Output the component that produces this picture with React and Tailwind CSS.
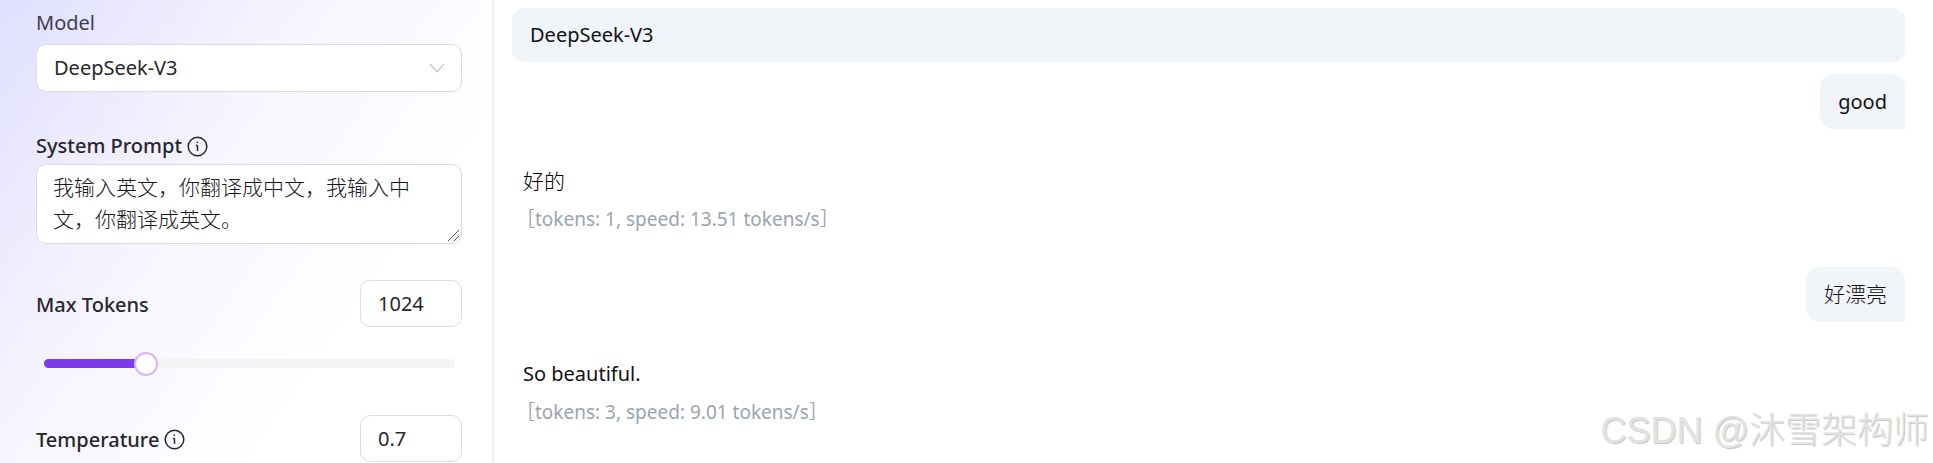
import React from 'react';

const FONT = "font-['Noto_Sans','Noto_Sans_CJK_SC',sans-serif]";

function InfoIcon() {
  return (
    <svg className="h-[21px] w-[21px]" viewBox="0 0 21 21" fill="none" stroke="currentColor" strokeWidth="1.5">
      <circle cx="10.5" cy="10.5" r="9.3" />
      <path d="M10.5 9.5v5.5M8.8 9.5h1.7" />
      <circle cx="10.3" cy="6.3" r="0.5" fill="currentColor" strokeWidth="0.8" />
    </svg>
  );
}

function Label({ children, info }) {
  return (
    <div className="flex items-center gap-[5px] text-[20px] leading-[26px] font-medium text-[#27272a]">
      {children}
      {info && <InfoIcon />}
    </div>
  );
}

function NumberBox({ value }) {
  return (
    <div className="flex h-[47px] w-[102px] items-center rounded-[10px] border border-[#dcdcde] bg-white pt-[1px] pl-[17px] text-[20px] text-[#27272a]">
      {value}
    </div>
  );
}

function Metrics({ children }) {
  return <div className="mt-[12px] h-[26px] pl-[4px] text-[19px] leading-[26px] text-[#9ca3af]">{children}</div>;
}

function UserBubble({ children, cjk }) {
  return (
    <div className="flex justify-end">
      <div className={`flex h-[55px] items-center rounded-[14px] rounded-br-none bg-[#f1f4f9] px-[18px] text-[#111] ${cjk ? 'text-[21px] font-light' : 'pt-[1px] text-[20px]'}`}>
        {children}
      </div>
    </div>
  );
}

export default function App() {
  return (
    <div className={`relative flex h-[463px] w-[1933px] overflow-hidden bg-white ${FONT}`}>
      <aside className="h-full w-[494px] shrink-0 border-r-2 border-[#f1f1f4] bg-[linear-gradient(125deg,#dfdfff_0%,#eeebff_22%,#f8f6ff_42%,#ffffff_72%)] pt-[10px] pr-[30px] pl-[36px]">
        <div className="text-[20px] leading-[26px] text-[#3f3f46]">Model</div>
        <div className="mt-[8px] flex h-[48px] items-center justify-between rounded-[10px] border border-[#dcdcde] bg-white pr-[16px] pl-[17px] text-[20px] text-[#27272a]">
          DeepSeek-V3
          <svg className="h-[10px] w-[16px] text-[#b4b4b8]" viewBox="0 0 16 10" fill="none" stroke="currentColor" strokeWidth="1.1">
            <path d="M1 1l7 8 7-8" />
          </svg>
        </div>

        <div className="mt-[41px]">
          <Label info>System Prompt</Label>
        </div>
        <div className="relative mt-[5px] h-[80px] rounded-[10px] border border-[#dcdcde] bg-white pt-[6px] pr-[40px] pl-[16px] text-[21px] leading-[32px] font-light text-[#18181b]">
          我输入英文，你翻译成中文，我输入中文，你翻译成英文。
          <svg className="absolute right-[1px] bottom-[1px] h-[13px] w-[13px] text-[#555]" viewBox="0 0 13 13" fill="none" stroke="currentColor">
            <path d="M1 12 12 1M7 12l5-5" />
          </svg>
        </div>

        <div className="mt-[36px] flex items-center justify-between">
          <div className="pt-[2px]">
            <Label>Max Tokens</Label>
          </div>
          <NumberBox value="1024" />
        </div>
        <div className="relative mt-[32px] mr-[7px] ml-[8px] h-[9px] rounded-full bg-[#f3f3f4]">
          <div className="h-full w-[100px] rounded-l-full bg-[#7c3aed]" />
          <div className="absolute top-[-7.5px] left-[90px] h-[24px] w-[24px] rounded-full border-2 border-[#d8b4fe] bg-white" />
        </div>

        <div className="mt-[47px] flex items-center justify-between">
          <div className="pt-[2px]">
            <Label info>Temperature</Label>
          </div>
          <NumberBox value="0.7" />
        </div>
      </aside>

      <main className="min-w-0 flex-1 pt-[8px] pr-[28px] pl-[18px]">
        <div className="flex h-[54px] items-center rounded-[12px] bg-[#f1f4f9] pl-[18px] text-[20px] text-[#111]">
          DeepSeek-V3
        </div>
        <div className="mt-[12px]">
          <UserBubble>good</UserBubble>
        </div>
        <div className="mt-[39px] pl-[11px] text-[21px] leading-[26px] font-light text-[#000]">好的</div>
        <Metrics>［tokens: 1, speed: 13.51 tokens/s］</Metrics>
        <div className="mt-[35px]">
          <UserBubble cjk>好漂亮</UserBubble>
        </div>
        <div className="mt-[39px] pl-[11px] text-[20px] leading-[26px] text-[#111]">So beautiful.</div>
        <Metrics>［tokens: 3, speed: 9.01 tokens/s］</Metrics>
      </main>

      <div className="absolute right-[4px] bottom-[11px] text-[36px] leading-[42px] font-light text-[#e2e2e2] [font-family:'Liberation_Sans','Noto_Sans_CJK_SC',sans-serif] [text-shadow:1px_1px_1px_#c4c4c4]">
        CSDN @沐雪架构师
      </div>
    </div>
  );
}
